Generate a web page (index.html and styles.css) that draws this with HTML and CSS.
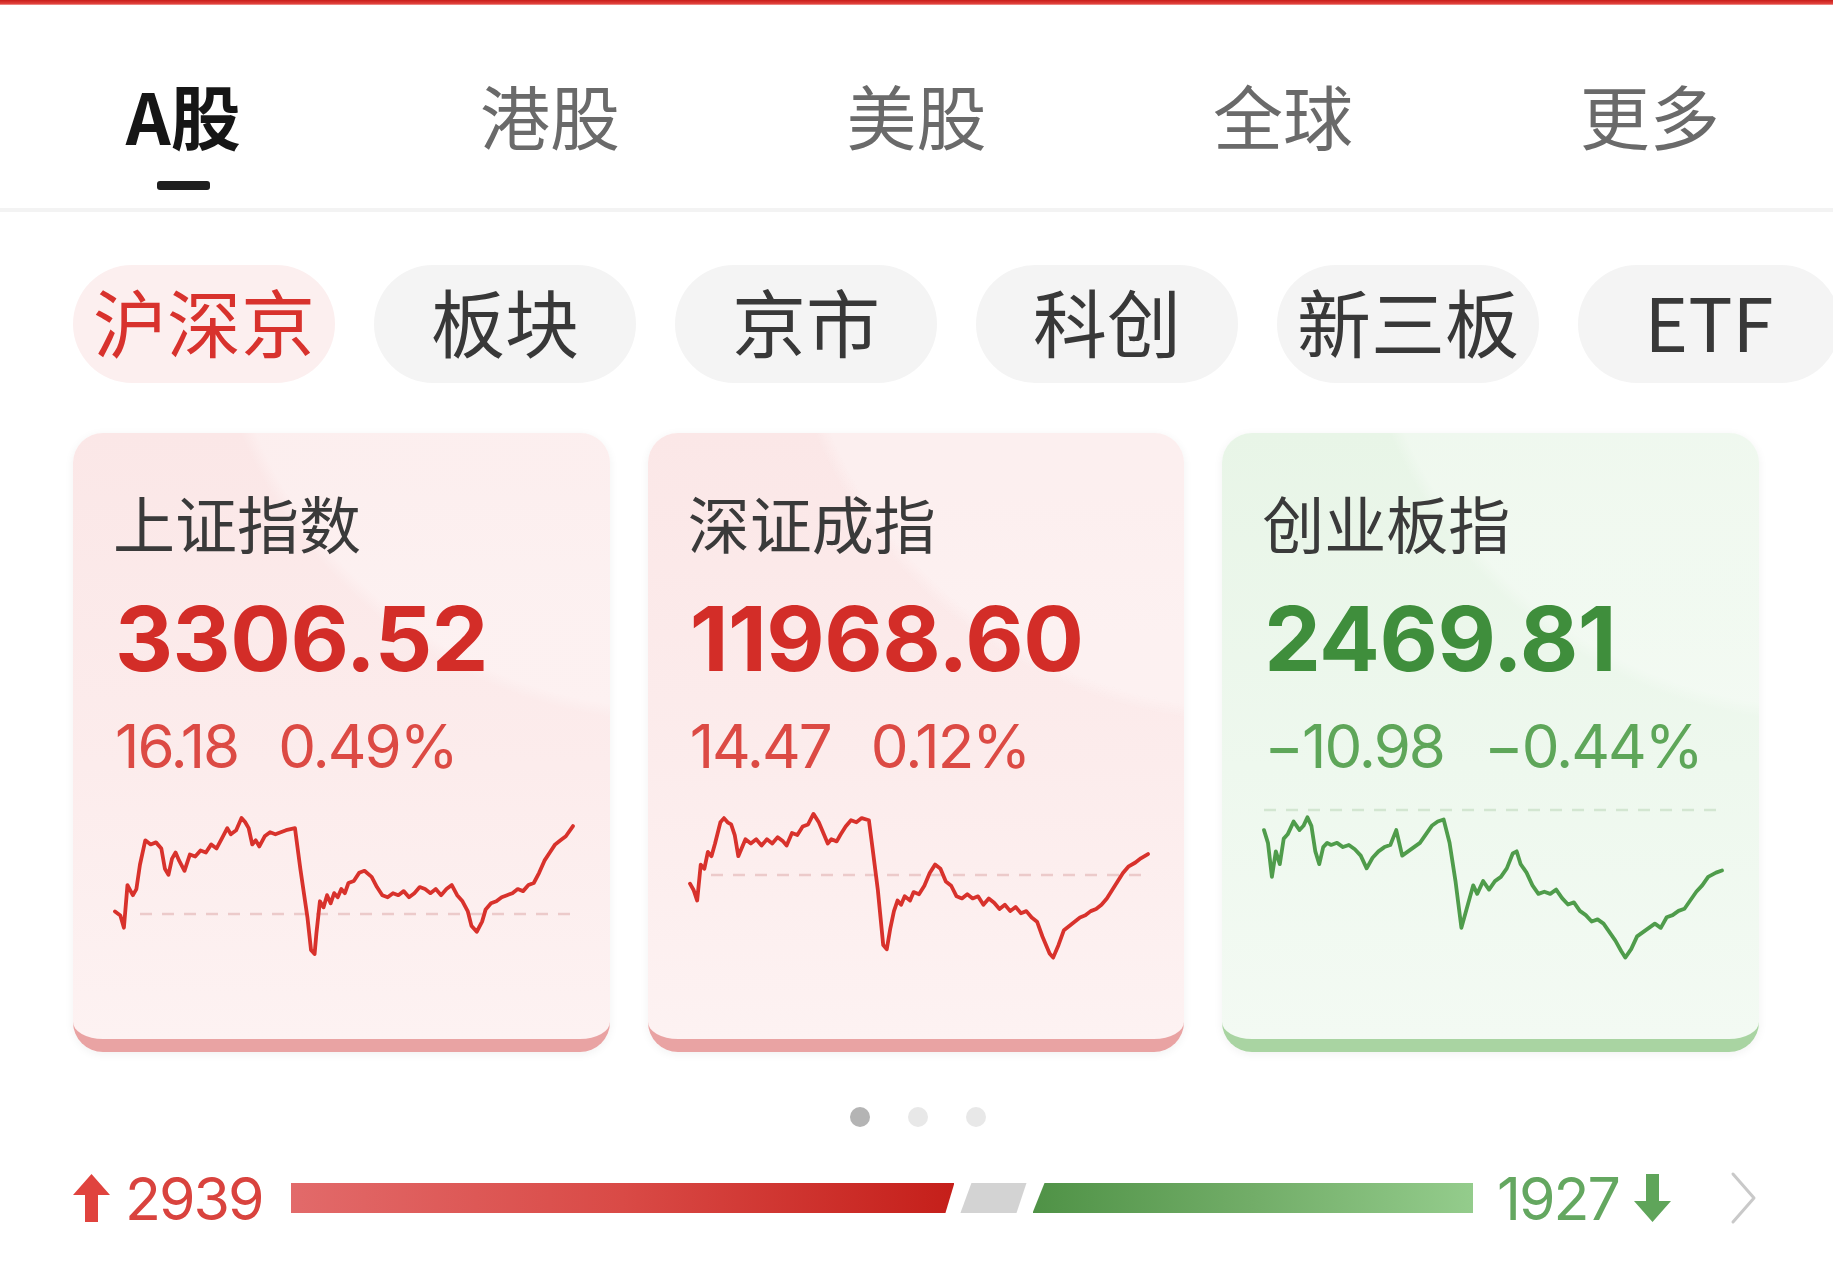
FILE: index.html
```html
<!DOCTYPE html>
<html lang="zh-CN">
<head>
<meta charset="utf-8">
<title>行情</title>
<link rel="stylesheet" href="styles.css">
</head>
<body>
<div class="page">
  <div class="topline"></div>
  <nav class="tabs">
    <div class="tab active"><span class="tab-text">A股</span><span class="tab-bar"></span></div>
    <div class="tab"><span class="tab-text">港股</span></div>
    <div class="tab"><span class="tab-text">美股</span></div>
    <div class="tab"><span class="tab-text">全球</span></div>
    <div class="tab"><span class="tab-text">更多</span></div>
  </nav>

  <div class="chips">
    <div class="chip active">沪深京</div>
    <div class="chip">板块</div>
    <div class="chip">京市</div>
    <div class="chip">科创</div>
    <div class="chip">新三板</div>
    <div class="chip">ETF</div>
  </div>

  <div class="cards">
    <div class="card up">
      <div class="card-title">上证指数</div>
      <div class="card-price">3306.52</div>
      <div class="card-change"><span>16.18</span><span>0.49%</span></div>
      <svg class="spark" viewBox="0 0 458 156" width="458" height="156">
        <line class="base" x1="25" y1="109" x2="458" y2="109"/>
        <g transform="scale(0.3564 0.40625) translate(-150 -943)">
          <polyline class="line" vector-effect="non-scaling-stroke" points="150,1205 165,1215 175,1245 185,1140 200,1165 210,1150 220,1090 235,1030 250,1040 265,1035 280,1050 290,1100 300,1115 310,1075 320,1060 330,1080 345,1105 360,1065 375,1070 390,1055 405,1060 420,1040 435,1050 450,1025 465,1000 475,1015 490,1005 505,975 515,985 525,1000 535,1040 545,1030 555,1045 570,1020 585,1010 600,1015 615,1010 630,1005 655,1000 670,1100 690,1220 700,1300 710,1310 715,1260 725,1180 735,1195 745,1165 755,1185 765,1160 775,1170 785,1150 795,1160 805,1135 820,1130 835,1110 850,1105 870,1120 885,1145 900,1165 915,1170 930,1160 945,1165 960,1155 975,1170 990,1160 1005,1145 1020,1150 1035,1160 1050,1150 1065,1165 1080,1150 1095,1140 1110,1165 1125,1180 1140,1205 1150,1240 1165,1255 1180,1230 1190,1200 1205,1185 1220,1180 1235,1170 1250,1165 1265,1160 1280,1150 1295,1155 1310,1140 1325,1135 1340,1110 1355,1080 1370,1060 1385,1040 1400,1030 1415,1020 1435,995"/>
        </g>
      </svg>
    </div>

    <div class="card up">
      <div class="card-title">深证成指</div>
      <div class="card-price">11968.60</div>
      <div class="card-change"><span>14.47</span><span>0.12%</span></div>
      <svg class="spark" viewBox="0 0 458 156" width="458" height="156">
        <line class="base" x1="21" y1="70" x2="458" y2="70"/>
        <g transform="scale(0.3578 0.4228) translate(-140 -949)">
          <polyline class="line" vector-effect="non-scaling-stroke" points="140,1135 150,1150 160,1175 170,1090 180,1100 190,1060 200,1070 210,1040 225,990 235,980 245,990 255,995 265,1020 275,1070 285,1050 295,1030 310,1040 325,1030 340,1045 355,1030 370,1040 385,1025 400,1035 410,1045 425,1015 440,1020 455,1000 470,995 485,970 500,990 515,1020 525,1040 535,1030 550,1035 560,1020 575,1000 590,985 605,990 620,980 640,985 650,1050 665,1150 680,1280 690,1290 700,1240 710,1200 720,1175 730,1185 740,1165 755,1175 765,1155 780,1160 795,1140 810,1110 825,1090 840,1100 855,1130 870,1140 885,1165 900,1170 915,1160 930,1170 945,1165 960,1185 975,1170 990,1180 1005,1195 1020,1185 1035,1200 1050,1190 1065,1205 1080,1200 1095,1215 1110,1225 1125,1260 1135,1280 1145,1300 1155,1310 1170,1280 1185,1245 1200,1235 1215,1225 1230,1215 1245,1210 1260,1200 1275,1195 1290,1185 1305,1170 1320,1150 1335,1130 1350,1110 1365,1095 1385,1085 1400,1075 1420,1065"/>
        </g>
      </svg>
    </div>

    <div class="card down">
      <div class="card-title">创业板指</div>
      <div class="card-price">2469.81</div>
      <div class="card-change"><span>−10.98</span><span>−0.44%</span></div>
      <svg class="spark" viewBox="0 0 458 156" width="458" height="156">
        <line class="base" x1="0" y1="5" x2="458" y2="5"/>
        <g transform="scale(0.3948 0.4251) translate(-125 -951)">
          <polyline class="line" vector-effect="non-scaling-stroke" points="125,1010 135,1040 145,1120 155,1060 165,1090 175,1030 185,1020 200,990 215,1010 225,1000 235,980 245,1000 255,1060 265,1090 275,1050 285,1040 295,1045 310,1040 325,1050 340,1045 355,1055 370,1070 385,1100 400,1075 415,1060 430,1050 445,1045 460,1010 475,1070 490,1060 505,1050 520,1040 535,1020 550,1000 565,990 580,985 595,1040 610,1130 625,1240 640,1190 655,1140 665,1160 680,1130 695,1150 710,1130 725,1120 740,1100 755,1065 765,1060 775,1090 790,1110 805,1140 820,1160 835,1155 850,1160 865,1150 880,1170 895,1185 910,1180 925,1200 940,1210 955,1225 970,1220 985,1230 1000,1250 1015,1270 1030,1295 1040,1310 1055,1290 1070,1260 1085,1250 1100,1240 1115,1230 1130,1240 1145,1215 1160,1210 1175,1200 1190,1195 1205,1175 1220,1155 1235,1140 1250,1120 1270,1110 1285,1105"/>
        </g>
      </svg>
    </div>
  </div>

  <div class="dots">
    <span class="dot on"></span><span class="dot"></span><span class="dot"></span>
  </div>

  <div class="breadth">
    <svg class="arrow" viewBox="0 0 37 48" width="37" height="48"><path class="arrow-up" d="M18.5 0 L37 21 L25 21 L25 48 L12 48 L12 21 L0 21 Z"/></svg>
    <span class="count rise">2939</span>
    <div class="bars">
      <div class="seg seg-up" style="flex-grow:663"></div>
      <div class="seg seg-flat" style="flex-grow:66"></div>
      <div class="seg seg-down" style="flex-grow:440"></div>
    </div>
    <span class="count fall">1927</span>
    <svg class="arrow" viewBox="0 0 37 48" width="37" height="48"><path class="arrow-down" d="M18.5 48 L37 27 L25 27 L25 0 L12 0 L12 27 L0 27 Z"/></svg>
    <svg class="chev" viewBox="0 0 33 54" width="33" height="54"><polyline points="6,3 27,27 6,51"/></svg>
  </div>
</div>
</body>
</html>
```

FILE: styles.css
```css
html, body {
  margin: 0;
  padding: 0;
  background: #ffffff;
}

.page {
  width: 1833px;
  height: 1280px;
  overflow: hidden;
  background: #ffffff;
  font-family: "Noto Sans CJK SC", "Noto Sans", sans-serif;
}

.topline {
  height: 5px;
  background: linear-gradient(180deg, #c91d1a 0%, #e0403b 70%, #f2a3a0 100%);
}

/* ---------- top tabs ---------- */
.tabs {
  display: grid;
  grid-template-columns: repeat(5, 1fr);
  padding-top: 75px;
  height: 128px;
  border-bottom: 4px solid #f3f3f3;
}

.tab {
  display: flex;
  flex-direction: column;
  align-items: center;
}

.tab-text {
  font-size: 70px;
  line-height: 70px;
  color: #6a6a6a;
  font-weight: 400;
}

.tab.active .tab-text {
  color: #161616;
  font-weight: 700;
}

.tab-bar {
  margin-top: 31px;
  width: 53px;
  height: 9px;
  border-radius: 3px;
  background: #1e1e1e;
}

/* ---------- chips ---------- */
.chips {
  display: flex;
  gap: 39px;
  padding-left: 73px;
  margin-top: 53px;
  overflow: hidden;
}

.chip {
  flex: 0 0 262px;
  height: 118px;
  border-radius: 59px;
  background: #f4f4f4;
  color: #383838;
  font-size: 74px;
  line-height: 74px;
  display: flex;
  align-items: center;
  justify-content: center;
  padding-bottom: 8px;
  box-sizing: border-box;
}

.chip.active {
  background: #fcefef;
  color: #d8322d;
}

/* ---------- index cards ---------- */
.cards {
  display: grid;
  grid-template-columns: repeat(3, 1fr);
  gap: 38px;
  padding: 0 74px 0 73px;
  margin-top: 50px;
}

.card {
  height: 619px;
  box-sizing: border-box;
  border-radius: 30px;
  padding: 58px 0 0 40px;
  border-bottom: 13px solid #e9a4a4;
  box-shadow: 0 2px 10px rgba(0, 0, 0, 0.06);
  overflow: hidden;
}

.card.up {
  background:
    radial-gradient(circle at 112% -30%, rgba(255, 255, 255, 0.32) 0 46%, rgba(255, 255, 255, 0) 47.5%),
    linear-gradient(180deg, #fbe7e7 0%, #fcecec 55%, #fdf2f2 100%);
  border-bottom-color: #e9a3a3;
}

.card.down {
  background:
    radial-gradient(circle at 112% -30%, rgba(255, 255, 255, 0.32) 0 46%, rgba(255, 255, 255, 0) 47.5%),
    linear-gradient(180deg, #e8f5e7 0%, #eef8ee 55%, #f3faf3 100%);
  border-bottom-color: #a9d4a2;
}

.card-title {
  font-size: 62px;
  line-height: 62px;
  color: #3a3a3a;
}

.card-price {
  margin-top: 41px;
  margin-left: 2px;
  font-family: "Inter", "Liberation Sans", sans-serif;
  font-weight: 700;
  font-size: 90px;
  line-height: 90px;
  letter-spacing: -0.5px;
}

.card-change {
  margin-top: 32px;
  margin-left: 2px;
  display: flex;
  gap: 40px;
  font-family: "Inter", "Liberation Sans", sans-serif;
  font-size: 60px;
  line-height: 60px;
  letter-spacing: -2px;
}

.up .card-price { color: #d32d28; }
.up .card-change { color: #dc4a44; }
.down .card-price { color: #3f8e3c; }
.down .card-change { color: #5ea659; }

.spark {
  display: block;
  margin-top: 29px;
  margin-left: 2px;
  overflow: visible;
}

.spark .base {
  stroke-width: 2.5;
  stroke-dasharray: 12 10;
}

.spark .line {
  fill: none;
  stroke-width: 3.8;
  stroke-linejoin: round;
  stroke-linecap: round;
}

.up .spark .base { stroke: #eccaca; }
.up .spark .line { stroke: #d8322c; }
.down .spark .base { stroke: #d3e6d1; }
.down .spark .line { stroke: #4f9c4b; }

/* ---------- pager dots ---------- */
.dots {
  display: flex;
  justify-content: center;
  gap: 38px;
  margin-top: 55px;
  padding-left: 3px;
}

.dot {
  width: 20px;
  height: 20px;
  border-radius: 50%;
  background: #e8e8e8;
}

.dot.on {
  background: #b4b4b4;
}

/* ---------- breadth bar ---------- */
.breadth {
  display: flex;
  align-items: center;
  height: 56px;
  margin-top: 43px;
  padding: 0 73px;
}

.arrow {
  flex: 0 0 auto;
  display: block;
}

.arrow-up { fill: #e0433e; }
.arrow-down { fill: #5fa55a; }

.count {
  font-family: "Inter", "Liberation Sans", sans-serif;
  font-size: 59px;
  line-height: 59px;
  letter-spacing: -2px;
}

.count.rise {
  color: #d9433e;
  margin-left: 15px;
  margin-right: 28px;
}

.count.fall {
  color: #64a760;
  margin-left: 24px;
  margin-right: 15px;
}

.bars {
  flex: 1;
  display: flex;
  height: 30px;
  gap: 6px;
}

.seg {
  flex-basis: 0;
  height: 30px;
}

.seg-up {
  background: linear-gradient(90deg, #e26a6a 0%, #d94a46 50%, #c51f1a 100%);
  clip-path: polygon(0 0, 100% 0, calc(100% - 9px) 100%, 0 100%);
}

.seg-flat {
  background: #d3d3d3;
  clip-path: polygon(11px 0, 100% 0, calc(100% - 10px) 100%, 0 100%);
}

.seg-down {
  background: linear-gradient(90deg, #4f9246 0%, #72ad68 50%, #94cc8c 100%);
  clip-path: polygon(12px 0, 100% 0, 100% 100%, 0 100%);
}

.chev {
  flex: 0 0 auto;
  display: block;
  margin-left: 56px;
}

.chev polyline {
  fill: none;
  stroke: #c9c9c9;
  stroke-width: 3;
  stroke-linecap: round;
  stroke-linejoin: round;
}
```
